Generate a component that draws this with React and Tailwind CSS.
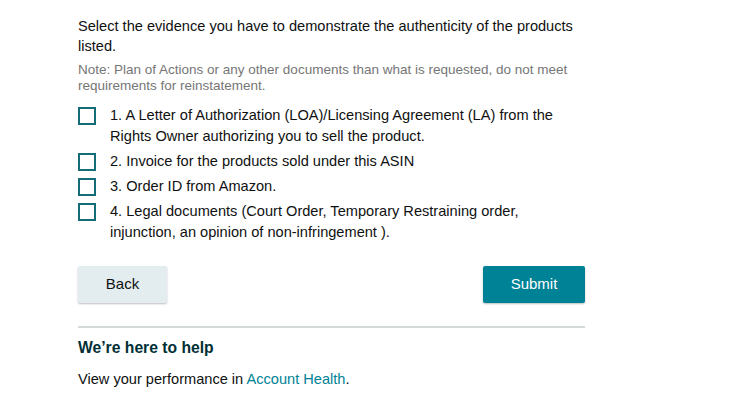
export default function App() {
  const items = [
    "1. A Letter of Authorization (LOA)/Licensing Agreement (LA) from the Rights Owner authorizing you to sell the product.",
    "2. Invoice for the products sold under this ASIN",
    "3. Order ID from Amazon.",
    "4. Legal documents (Court Order, Temporary Restraining order, injunction, an opinion of non-infringement ).",
  ];

  return (
    <div className="min-h-screen bg-white font-['Liberation_Sans',Arial,sans-serif] text-[#0f1111]">
      <div className="ml-[78px] w-[507px] pt-[16px]">
        {/* Intro */}
        <p className="text-[14.6px] leading-[20px] text-[#0f1111]">
          Select the evidence you have to demonstrate the authenticity of the products listed.
        </p>
        <p className="mt-[6px] text-[13.5px] leading-[16px] text-[#767676]">
          Note: Plan of Actions or any other documents than what is requested, do not meet requirements for reinstatement.
        </p>

        {/* Checkboxes */}
        <div className="mt-[11px] flex flex-col gap-[4px]">
          {items.map((text) => (
            <label key={text} className="flex items-start gap-[14px]">
              <span className="mt-[2px] h-[18px] w-[18px] shrink-0 border-2 border-[#136c76] bg-white" />
              <span className="text-[14.6px] leading-[21px] text-[#0f1111]">{text}</span>
            </label>
          ))}
        </div>

        {/* Actions */}
        <div className="mt-[23px] flex items-center justify-between">
          <button className="h-[37px] w-[89px] rounded-[2px] bg-[#e3ecee] text-[15px] text-[#0f1111] shadow-[0_1px_2px_rgba(0,0,0,0.25)]">
            Back
          </button>
          <button className="h-[37px] w-[102px] rounded-[2px] bg-[#008296] text-[15px] text-white shadow-[0_1px_2px_rgba(0,0,0,0.25)]">
            Submit
          </button>
        </div>

        {/* Help */}
        <div className="mt-[23px] border-t-2 border-[#d5d9d9] pt-[10px]">
          <h3 className="text-[15.7px] font-bold leading-[20px] text-[#002f36]">
            We’re here to help
          </h3>
          <p className="mt-[11px] text-[14.6px] leading-[20px] text-[#0f1111]">
            View your performance in <a className="text-[#008296]">Account Health</a>.
          </p>
        </div>
      </div>
    </div>
  );
}
